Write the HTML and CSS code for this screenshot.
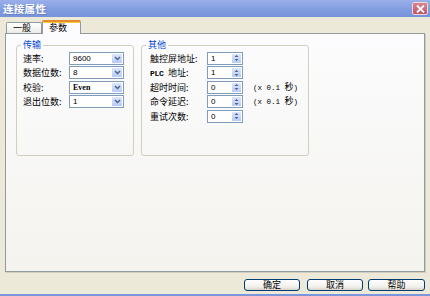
FILE: index.html
```html
<!DOCTYPE html>
<html lang="zh">
<head>
    <meta charset="UTF-8">
    <title>连接属性</title>
    <link rel="stylesheet" href="styles.css">
</head>
<body>
    <div class="window">
        <div class="titlebar">
            <span class="title">连接属性</span>
            <span class="close">
                <svg width="9" height="8" viewBox="0 0 9 8"><path d="M1 0.5 L8 7.5 M8 0.5 L1 7.5" stroke="#fff" stroke-width="1.8"/></svg>
            </span>
        </div>
        <div class="tabs">
            <div class="tab">一般</div>
            <div class="tab active">参数</div>
        </div>
        <div class="panel">
            <fieldset class="group transfer">
                <legend>传输</legend>
                <div class="row"><label>速率:</label><div class="combo"><span class="val">9600</span><span class="drop"><svg width="7" height="5" viewBox="0 0 7 5"><path d="M1 1 L3.5 3.5 L6 1" fill="none" stroke="#4D6185" stroke-width="1.4"/></svg></span></div></div>
                <div class="row"><label>数据位数:</label><div class="combo"><span class="val">8</span><span class="drop"><svg width="7" height="5" viewBox="0 0 7 5"><path d="M1 1 L3.5 3.5 L6 1" fill="none" stroke="#4D6185" stroke-width="1.4"/></svg></span></div></div>
                <div class="row"><label>校验:</label><div class="combo"><span class="val serif">Even</span><span class="drop"><svg width="7" height="5" viewBox="0 0 7 5"><path d="M1 1 L3.5 3.5 L6 1" fill="none" stroke="#4D6185" stroke-width="1.4"/></svg></span></div></div>
                <div class="row"><label>退出位数:</label><div class="combo"><span class="val">1</span><span class="drop"><svg width="7" height="5" viewBox="0 0 7 5"><path d="M1 1 L3.5 3.5 L6 1" fill="none" stroke="#4D6185" stroke-width="1.4"/></svg></span></div></div>
            </fieldset>
            <fieldset class="group other">
                <legend>其他</legend>
                <div class="row"><label>触控屏地址:</label><div class="spin"><span class="val">1</span><span class="arrows"><svg width="5" height="8" viewBox="0 0 5 8"><path d="M0.5 3 L2.5 1 L4.5 3 Z M0.5 5 L2.5 7 L4.5 5 Z" fill="#4D6185"/></svg></span></div></div>
                <div class="row"><label><span class="mono caps">PLC </span>地址:</label><div class="spin"><span class="val">1</span><span class="arrows"><svg width="5" height="8" viewBox="0 0 5 8"><path d="M0.5 3 L2.5 1 L4.5 3 Z M0.5 5 L2.5 7 L4.5 5 Z" fill="#4D6185"/></svg></span></div></div>
                <div class="row"><label>超时时间:</label><div class="spin"><span class="val">0</span><span class="arrows"><svg width="5" height="8" viewBox="0 0 5 8"><path d="M0.5 3 L2.5 1 L4.5 3 Z M0.5 5 L2.5 7 L4.5 5 Z" fill="#4D6185"/></svg></span></div><span class="unit"><span class="mono">(x 0.1 </span>秒<span class="mono">)</span></span></div>
                <div class="row"><label>命令延迟:</label><div class="spin"><span class="val">0</span><span class="arrows"><svg width="5" height="8" viewBox="0 0 5 8"><path d="M0.5 3 L2.5 1 L4.5 3 Z M0.5 5 L2.5 7 L4.5 5 Z" fill="#4D6185"/></svg></span></div><span class="unit"><span class="mono">(x 0.1 </span>秒<span class="mono">)</span></span></div>
                <div class="row"><label>重试次数:</label><div class="spin"><span class="val">0</span><span class="arrows"><svg width="5" height="8" viewBox="0 0 5 8"><path d="M0.5 3 L2.5 1 L4.5 3 Z M0.5 5 L2.5 7 L4.5 5 Z" fill="#4D6185"/></svg></span></div></div>
            </fieldset>
        </div>
        <div class="buttons">
            <button>确定</button>
            <button>取消</button>
            <button class="help">帮助</button>
        </div>
    </div>
</body>
</html>
```

FILE: styles.css
```css
body {
    margin: 0;
    width: 430px;
    height: 296px;
    overflow: hidden;
    font-family: "Noto Sans CJK SC", sans-serif;
    font-size: 9px;
    color: #000;
}
.window {
    height: 296px;
    box-sizing: border-box;
    background: #ECE9D8;
    border-bottom: 2px solid #7C96DC;
    display: flex;
    flex-direction: column;
}
.titlebar {
    height: 17px;
    flex: none;
    background: linear-gradient(#9AB0EA, #829DE0 55%, #7592DB);
    display: flex;
    align-items: center;
    justify-content: space-between;
    padding: 0 2px 0 3px;
}
.title {
    color: #fff;
    font-weight: bold;
    font-size: 10.5px;
    letter-spacing: 0.3px;
    text-shadow: 1px 1px 0 #6a82c4;
}
.close {
    width: 16px;
    height: 13px;
    box-sizing: border-box;
    background: linear-gradient(#D98592, #BC5566);
    border: 1px solid #EED6DB;
    border-radius: 2px;
    display: flex;
    align-items: center;
    justify-content: center;
}
.tabs {
    display: flex;
    align-items: flex-end;
    height: 13px;
    margin: 3px 0 0 6px;
    position: relative;
    z-index: 1;
}
.tab {
    width: 36px;
    height: 11px;
    box-sizing: border-box;
    border: 1px solid #919B9C;
    border-bottom: none;
    border-radius: 2px 2px 0 0;
    background: linear-gradient(#FEFEFE, #ECEBE6);
    padding-left: 6px;
    line-height: 10px;
}
.tab.active {
    width: 39px;
    height: 14px;
    margin-bottom: -1px;
    background: #FCFCFE;
    border-top: 2px solid #E68B2C;
    box-shadow: inset 0 1px 0 #FFC73C;
    line-height: 11px;
}
.panel {
    margin-left: 5px;
    width: 420px;
    height: 239px;
    flex: none;
    box-sizing: border-box;
    border: 1px solid #919B9C;
    box-shadow: 1px 1px 0 #D0CEBF;
    background: linear-gradient(#FCFCFE, #F4F3EE);
    display: flex;
    align-items: flex-start;
    gap: 7px;
    padding: 6px 0 0 10px;
}
.group {
    margin: 0;
    height: 116px;
    min-width: 0;
    box-sizing: border-box;
    border: 1px solid #D0D0BF;
    border-radius: 3px;
    padding: 0 0 0 6px;
}
.transfer {
    width: 118px;
}
.other {
    width: 168px;
    padding-left: 8px;
}
legend {
    color: #0046D5;
    font-size: 9px;
    line-height: 10px;
    padding: 0 2px;
}
.transfer legend {
    margin-left: -2px;
}
.other legend {
    margin-left: -4px;
}
.row {
    display: flex;
    align-items: center;
    height: 13px;
    margin-top: 1.5px;
}
.row label {
    flex: none;
    line-height: 13px;
}
.transfer label {
    width: 46px;
}
.other label {
    width: 57px;
}
.mono {
    font-family: "Liberation Mono", monospace;
    font-size: 7.5px;
}
.mono.caps {
    font-size: 8px;
    font-weight: bold;
    letter-spacing: -0.3px;
}
.combo, .spin {
    height: 13px;
    box-sizing: border-box;
    border: 1px solid #7F9DB9;
    background: #fff;
    display: flex;
}
.combo {
    width: 55px;
}
.spin {
    width: 36px;
}
.val {
    flex: 1;
    padding-left: 3px;
    font-family: "Liberation Sans", sans-serif;
    font-size: 8px;
    line-height: 11px;
}
.val.serif {
    font-family: "Liberation Serif", serif;
    font-weight: bold;
}
.drop, .arrows {
    border: 1px solid #fff;
    background: linear-gradient(#DCE6FC, #B8CBF6);
    display: flex;
    align-items: center;
    justify-content: center;
}
.drop {
    width: 10px;
}
.arrows {
    width: 9px;
}
.unit {
    margin-left: 10px;
    line-height: 13px;
}
.buttons {
    display: flex;
    justify-content: flex-end;
    gap: 7px;
    margin: 7px 5px 0 0;
}
button {
    width: 56px;
    height: 12px;
    padding: 0;
    border: 1px solid #003C74;
    border-radius: 3px;
    background: linear-gradient(#FFFFFF, #F0EFEA 70%, #D8D3C8);
    font-family: "Noto Sans CJK SC", sans-serif;
    font-size: 9px;
    line-height: 10px;
    color: #000;
}
.help {
    margin-left: -2px;
    width: 57px;
}
```
